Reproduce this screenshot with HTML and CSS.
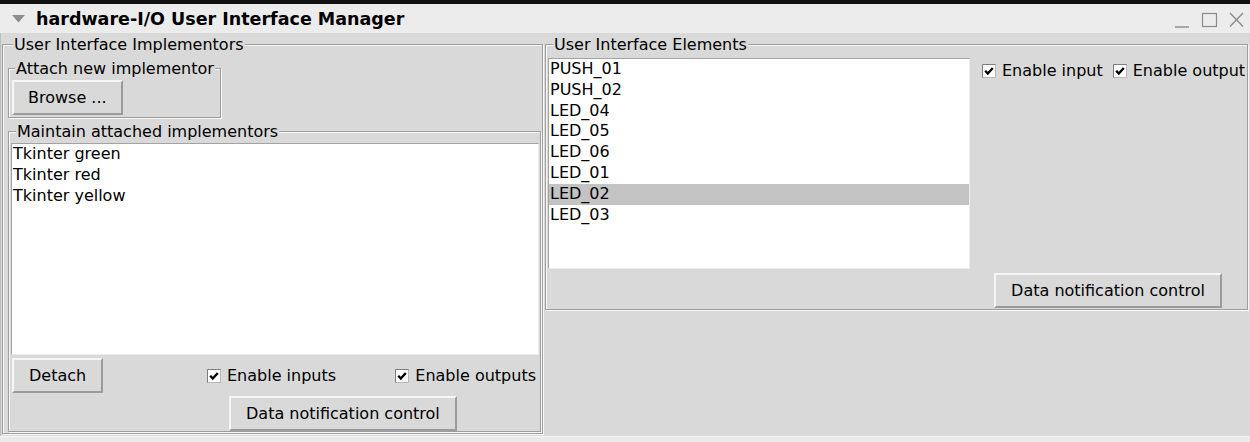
FILE: index.html
```html
<!DOCTYPE html>
<html lang="en">
<head>
<meta charset="utf-8">
<title>hardware-I/O User Interface Manager</title>
<link rel="stylesheet" href="styles.css">
</head>
<body>
<div class="window">
  <header class="titlebar">
    <svg class="menu-arrow" viewBox="0 0 13 8" width="13" height="8" aria-hidden="true">
      <polygon points="0,0 13,0 6.5,7.5" fill="#8e8e8e"/>
    </svg>
    <span class="title">hardware-I/O User Interface Manager</span>
    <svg class="wm-buttons" viewBox="0 0 70 16" width="70" height="16" aria-hidden="true">
      <line x1="1" y1="15" x2="15" y2="15" stroke="#8a8a8a" stroke-width="1.4"/>
      <rect x="28.5" y="1.5" width="14" height="13" fill="none" stroke="#8a8a8a" stroke-width="1.2"/>
      <line x1="56" y1="1" x2="69" y2="14.5" stroke="#8a8a8a" stroke-width="1.4"/>
      <line x1="69" y1="1" x2="56" y2="14.5" stroke="#8a8a8a" stroke-width="1.4"/>
    </svg>
  </header>

  <main class="client">
    <fieldset class="group group-impl">
      <legend>User Interface Implementors</legend>

      <fieldset class="group group-attach">
        <legend>Attach new implementor</legend>
        <button class="tk-button browse" type="button">Browse ...</button>
      </fieldset>

      <fieldset class="group group-maintain">
        <legend>Maintain attached implementors</legend>
        <ul class="listbox listbox-impl">
          <li>Tkinter green</li>
          <li>Tkinter red</li>
          <li>Tkinter yellow</li>
        </ul>
        <div class="impl-actions">
          <button class="tk-button detach" type="button">Detach</button>
          <label class="check check-inputs">
            <svg class="indicator" viewBox="0 0 14 14" width="14" height="14" aria-hidden="true">
              <rect x="0.5" y="0.5" width="13" height="13" fill="#fff" stroke="#b8b8b8"/>
              <path d="M0.5 13.5V0.5H13.5" fill="none" stroke="#7e7e7e"/>
              <path d="M3.2 6.8L5.8 9.6L10.8 3.9" fill="none" stroke="#000" stroke-width="2.3"/>
            </svg>
            <span>Enable inputs</span>
          </label>
          <label class="check check-outputs">
            <svg class="indicator" viewBox="0 0 14 14" width="14" height="14" aria-hidden="true">
              <rect x="0.5" y="0.5" width="13" height="13" fill="#fff" stroke="#b8b8b8"/>
              <path d="M0.5 13.5V0.5H13.5" fill="none" stroke="#7e7e7e"/>
              <path d="M3.2 6.8L5.8 9.6L10.8 3.9" fill="none" stroke="#000" stroke-width="2.3"/>
            </svg>
            <span>Enable outputs</span>
          </label>
          <button class="tk-button notify-impl" type="button">Data notification control</button>
        </div>
      </fieldset>
    </fieldset>

    <fieldset class="group group-elements">
      <legend>User Interface Elements</legend>
      <div class="elements-grid">
        <ul class="listbox listbox-elements">
          <li>PUSH_01</li>
          <li>PUSH_02</li>
          <li>LED_04</li>
          <li>LED_05</li>
          <li>LED_06</li>
          <li>LED_01</li>
          <li class="selected">LED_02</li>
          <li>LED_03</li>
        </ul>
        <div class="element-checks">
          <label class="check">
            <svg class="indicator" viewBox="0 0 14 14" width="14" height="14" aria-hidden="true">
              <rect x="0.5" y="0.5" width="13" height="13" fill="#fff" stroke="#b8b8b8"/>
              <path d="M0.5 13.5V0.5H13.5" fill="none" stroke="#7e7e7e"/>
              <path d="M3.2 6.8L5.8 9.6L10.8 3.9" fill="none" stroke="#000" stroke-width="2.3"/>
            </svg>
            <span>Enable input</span>
          </label>
          <label class="check">
            <svg class="indicator" viewBox="0 0 14 14" width="14" height="14" aria-hidden="true">
              <rect x="0.5" y="0.5" width="13" height="13" fill="#fff" stroke="#b8b8b8"/>
              <path d="M0.5 13.5V0.5H13.5" fill="none" stroke="#7e7e7e"/>
              <path d="M3.2 6.8L5.8 9.6L10.8 3.9" fill="none" stroke="#000" stroke-width="2.3"/>
            </svg>
            <span>Enable output</span>
          </label>
        </div>
        <button class="tk-button notify-elements" type="button">Data notification control</button>
      </div>
    </fieldset>
  </main>

  <footer class="bottom-edge"></footer>
</div>
</body>
</html>
```

FILE: styles.css
```css
* {
  box-sizing: border-box;
}

html,
body {
  margin: 0;
  padding: 0;
}

body {
  width: 1250px;
  height: 442px;
  overflow: hidden;
  background: #d9d9d9;
  color: #000;
  font-family: "DejaVu Sans", "Noto Sans", sans-serif;
  font-size: 16px;
}

.window {
  display: flex;
  flex-direction: column;
  height: 442px;
  border-top: 4px solid #111;
}

/* window manager title bar */
.titlebar {
  display: flex;
  align-items: center;
  height: 29px;
  padding-left: 12px;
  padding-right: 6px;
  background: #ececec;
}

.menu-arrow {
  flex: none;
  margin-right: 11px;
  margin-top: 1px;
}

.title {
  font-weight: bold;
  font-size: 17.5px;
  white-space: nowrap;
}

.wm-buttons {
  flex: none;
  margin-left: auto;
  margin-top: 2px;
}

/* client area */
.client {
  flex: 1;
  display: flex;
  align-items: flex-start;
  gap: 2px;
  padding: 2px 2px 0 1px;
  background: #d9d9d9;
  border-left: 1px solid #bdbdbd;
}

.bottom-edge {
  height: 6px;
  background: #eaeaea;
  border-top: 1px solid #f6f6f6;
}

/* groove-framed label frames */
.group {
  margin: 0;
  padding: 0;
  min-width: 0;
  border: 1px solid #9e9e9e;
  box-shadow: inset 1px 1px 0 #f7f7f7, 1px 1px 0 #f7f7f7;
}

.group > legend {
  margin-left: 7px;
  padding: 0 1px;
  line-height: 19px;
  background: #d9d9d9;
  white-space: nowrap;
}

.group-impl {
  width: 541px;
  padding: 0 0 1px 0;
}

.group-impl > legend {
  margin-left: 10px;
}

.group-attach {
  width: 213px;
  margin: 5px 0 0 5px;
  padding: 2px 0 2px 3px;
}

.group-attach > legend {
  margin-left: 3px;
}

.group-maintain {
  margin: 4px 1px 0 5px;
  padding: 2px 0 0 0;
}

.group-elements {
  flex: 1;
}

/* Tk style raised buttons */
.tk-button {
  display: inline-flex;
  align-items: center;
  justify-content: center;
  height: 35px;
  padding: 0 15px;
  font: inherit;
  color: #000;
  background: #d9d9d9;
  border: 2px solid;
  border-color: #f6f6f6 #9b9b9b #9b9b9b #f6f6f6;
  white-space: nowrap;
}

.browse {
  padding: 0 14px;
}

/* listboxes */
.listbox {
  list-style: none;
  margin: 0;
  padding: 0;
  background: #fff;
  border: 1px solid;
  border-color: #a3a3a3 #ececec #ececec #a3a3a3;
  overflow: hidden;
}

.listbox li {
  height: 20.8px;
  line-height: 20.8px;
  padding-left: 1px;
  white-space: nowrap;
}

.listbox li.selected {
  background: #c3c3c3;
}

.listbox-impl {
  height: 212px;
  margin: 0 1px 0 2px;
}

/* check buttons */
.check {
  display: inline-flex;
  align-items: center;
  gap: 6px;
  line-height: 19px;
  white-space: nowrap;
}

.indicator {
  flex: none;
}

/* implementor action rows */
.impl-actions {
  display: grid;
  grid-template-columns: 195px 1fr auto;
  row-gap: 3px;
  align-items: center;
  justify-items: start;
  padding: 3px 4px 0 3px;
}

.notify-impl {
  grid-column: 2 / 4;
  margin-left: 22px;
}

/* element panel */
.elements-grid {
  display: grid;
  grid-template-columns: 422px 1fr;
  align-items: start;
  padding: 4px 1px 1px 2px;
}

.listbox-elements {
  height: 211px;
}

.element-checks {
  display: flex;
  gap: 10px;
  margin: 3px 0 0 12px;
}

.notify-elements {
  grid-column: 2;
  justify-self: center;
  margin-top: 4px;
}
```
